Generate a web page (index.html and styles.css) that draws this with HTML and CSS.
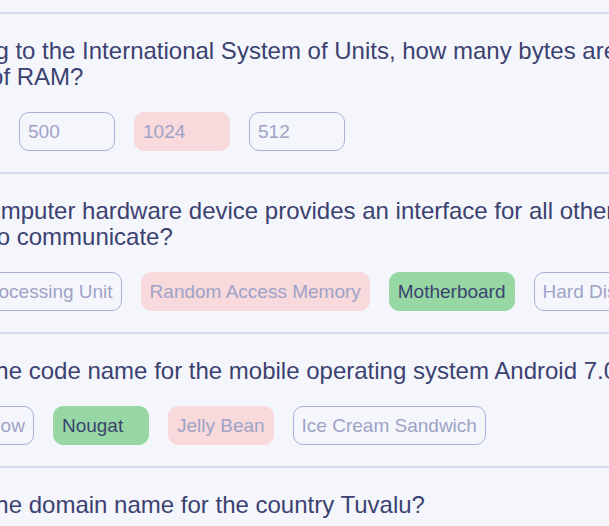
FILE: index.html
```html
<!DOCTYPE html>
<html lang="en">
<head>
<meta charset="utf-8">
<title>Quiz results</title>
<link rel="stylesheet" href="styles.css">
</head>
<body>
<main class="quiz">
  <section class="question">
    <h2 class="question-text">According to the International System of Units, how many bytes are in a kilobyte of RAM?</h2>
    <div class="answers">
      <button class="answer correct">1000</button>
      <button class="answer">500</button>
      <button class="answer wrong">1024</button>
      <button class="answer">512</button>
    </div>
  </section>
  <section class="question">
    <h2 class="question-text">Which computer hardware device provides an interface for all other connected devices to communicate?</h2>
    <div class="answers">
      <button class="answer">Central Processing Unit</button>
      <button class="answer wrong">Random Access Memory</button>
      <button class="answer correct">Motherboard</button>
      <button class="answer">Hard Disk Drive</button>
    </div>
  </section>
  <section class="question">
    <h2 class="question-text">What is the code name for the mobile operating system Android 7.0?</h2>
    <div class="answers">
      <button class="answer">Marshmallow</button>
      <button class="answer correct">Nougat</button>
      <button class="answer wrong">Jelly Bean</button>
      <button class="answer">Ice Cream Sandwich</button>
    </div>
  </section>
  <section class="question">
    <h2 class="question-text">What is the domain name for the country Tuvalu?</h2>
    <div class="answers">
      <button class="answer">.tv</button>
      <button class="answer">.tu</button>
      <button class="answer">.tt</button>
      <button class="answer">.tl</button>
    </div>
  </section>
</main>
</body>
</html>
```
FILE: styles.css
```css
html, body {
  margin: 0;
  padding: 0;
  background: #f5f6fb;
  overflow: hidden;
}

body {
  font-family: "Liberation Sans", Arial, sans-serif;
  color: #3c4372;
}

.quiz {
  margin-left: -96px;
  width: 836px;
  padding-top: 12px;
}

.question {
  border-top: 2px solid #d6d9ef;
  padding: 24px 0 21px;
}

.question-text {
  margin: 0 0 22px -2px;
  font-size: 24px;
  font-weight: 400;
  line-height: 26px;
  color: #3b4271;
}

.answers {
  display: flex;
  gap: 19px;
}

.answer {
  box-sizing: border-box;
  height: 39px;
  min-width: 96px;
  padding: 0 8px;
  display: inline-flex;
  align-items: center;
  justify-content: flex-start;
  font-family: "Liberation Sans", Arial, sans-serif;
  font-size: 19px;
  color: #9ea3c6;
  background: transparent;
  border: 1.5px solid #a9afda;
  border-radius: 10px;
  white-space: nowrap;
}

.answer.wrong {
  background: #f8d9dc;
  border-color: #f8d9dc;
}

.answer.correct {
  background: #97d7a3;
  border-color: #97d7a3;
  color: #3a4470;
}
```
